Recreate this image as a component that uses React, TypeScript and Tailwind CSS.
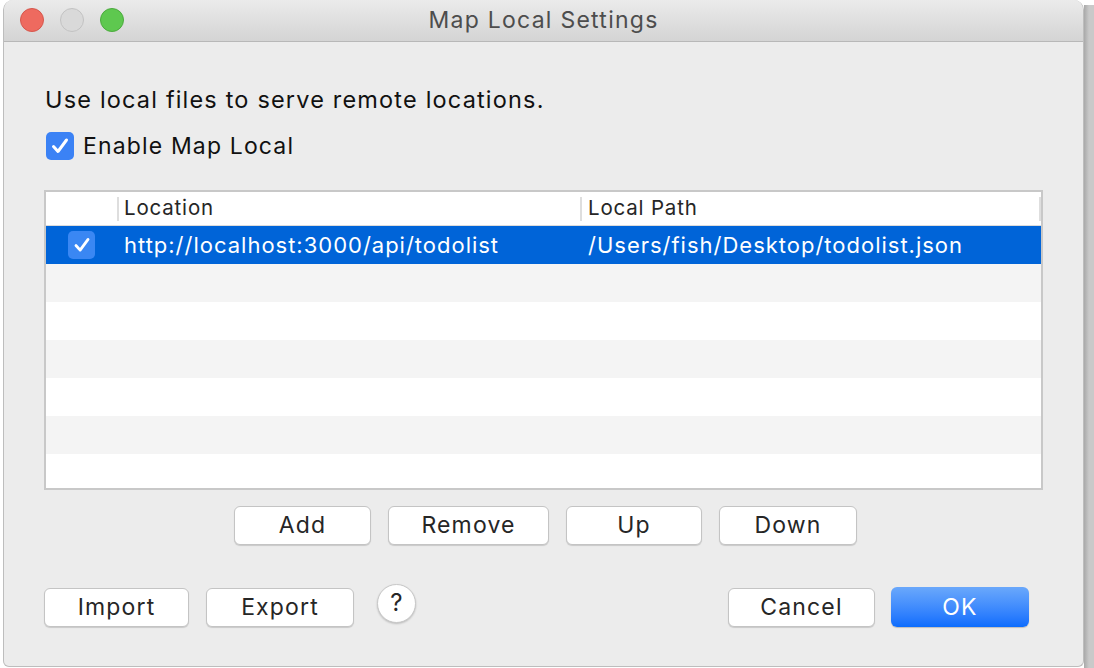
import React from 'react'

const font = { fontFamily: 'Inter, "Noto Sans", sans-serif' }

function Check({ size }: { size: number }) {
  return (
    <svg width={size} height={size} viewBox="0 0 28 28">
      <path d="M7.5 14.5 L12 19.5 L20.5 8" fill="none" stroke="white" strokeWidth="3" strokeLinecap="round" strokeLinejoin="round" />
    </svg>
  )
}

function Btn({ label, w }: { label: string; w: string }) {
  return (
    <div className={`${w} h-[39px] flex items-center justify-center rounded-[6px] bg-white border border-[#c4c4c4] shadow-[0_1px_1px_rgba(0,0,0,0.15)] text-[23px] tracking-[0.05em] text-[#262626]`}>
      {label}
    </div>
  )
}

export default function App() {
  const rows = [0, 1, 2, 3, 4, 5]
  return (
    <div className="w-[1094px] h-[668px] bg-white flex overflow-hidden" style={font}>
      <div className="w-[3px]" />
      <div className="w-[1081px] h-[667px] flex flex-col bg-[#ececec] border-x border-b border-[#bdbdbd] rounded-t-[10px] rounded-b-[6px] overflow-hidden">
        {/* title bar */}
        <div className="h-[42px] shrink-0 relative flex items-center justify-center bg-gradient-to-b from-[#ebebeb] to-[#d4d4d4] border-b border-[#b8b8b8]">
          <div className="absolute left-[16px] top-[8px] flex gap-[16px]">
            <div className="w-[24px] h-[24px] rounded-full bg-[#ee6a5f] border border-[#d5574d]" />
            <div className="w-[24px] h-[24px] rounded-full bg-[#d9d9d9] border border-[#c2c2c2]" />
            <div className="w-[24px] h-[24px] rounded-full bg-[#5ec84f] border border-[#4caa3e]" />
          </div>
          <span className="text-[23px] tracking-[0.055em] text-[#4d4d4d]">Map Local Settings</span>
        </div>

        <div className="flex flex-col pl-[40px] pr-[40px]">
          <div className="mt-[44px] pl-[1px] h-[28px] flex items-center text-[23.5px] tracking-[0.05em] text-[#111]">
            Use local files to serve remote locations.
          </div>
          <div className="mt-[18px] h-[28px] flex items-center gap-[9px] pl-[2px]">
            <div className="w-[28px] h-[28px] rounded-[5px] bg-[#3b82f5] flex items-center justify-center">
              <Check size={28} />
            </div>
            <span className="text-[23px] tracking-[0.05em] text-[#111]">Enable Map Local</span>
          </div>

          {/* table */}
          <div className="mt-[30px] w-[999px] h-[300px] border-2 border-[#c8c8c8] bg-white flex flex-col overflow-hidden">
            <div className="h-[34px] shrink-0 flex items-center border-b border-[#dcdcdc] text-[20.5px] tracking-[0.04em] text-[#262626]">
              <div className="w-[71px] h-full" />
              <div className="w-[463px] h-full flex items-center">
                <div className="w-[2px] h-[24px] bg-[#dedede]" />
                <span className="pl-[5px]">Location</span>
              </div>
              <div className="flex-1 h-full flex items-center">
                <div className="w-[2px] h-[24px] bg-[#dedede]" />
                <span className="pl-[6px]">Local Path</span>
                <div className="ml-auto w-[2px] h-[24px] bg-[#dedede]" />
              </div>
            </div>
            <div className="h-[38px] shrink-0 flex items-center bg-[#0064d8] text-white text-[22px] tracking-[0.045em]">
              <div className="w-[71px] flex justify-center">
                <div className="w-[27px] h-[28px] rounded-[5px] bg-[#3a87f3] flex items-center justify-center">
                  <Check size={26} />
                </div>
              </div>
              <div className="w-[463px] pl-[7px]">http://localhost:3000/api/todolist</div>
              <div className="flex-1 pl-[8px]">/Users/fish/Desktop/todolist.json</div>
            </div>
            {rows.map((r) => (
              <div key={r} className={`h-[38px] shrink-0 ${r % 2 === 0 ? 'bg-[#f4f4f4]' : 'bg-white'}`} />
            ))}
          </div>

          <div className="mt-[16px] flex gap-[17px] pl-[190px]">
            <Btn label="Add" w="w-[137px]" />
            <Btn label="Remove" w="w-[161px]" />
            <Btn label="Up" w="w-[136px]" />
            <Btn label="Down" w="w-[138px]" />
          </div>

          <div className="mt-[42px] flex items-center">
            <Btn label="Import" w="w-[145px]" />
            <div className="w-[17px]" />
            <Btn label="Export" w="w-[148px]" />
            <div className="ml-[23px] w-[39px] h-[39px] -mt-[8px] rounded-full bg-white border border-[#c8c8c8] shadow-[0_1px_2px_rgba(0,0,0,0.2)] flex items-center justify-center text-[24px] text-[#262626]">
              ?
            </div>
            <div className="ml-auto" />
            <Btn label="Cancel" w="w-[147px]" />
            <div className="w-[16px]" />
            <div className="w-[138px] h-[40px] flex items-center justify-center rounded-[6px] bg-gradient-to-b from-[#6aa8fb] to-[#0a6cfd] text-white text-[23px] tracking-[0.05em] shadow-[0_1px_1px_rgba(0,0,0,0.2)]">
              OK
            </div>
            <div className="w-[14px]" />
          </div>
        </div>
      </div>
      <div className="flex-1 mt-[5px] bg-gradient-to-r from-[#a9a9a9] via-[#c9c9c9] to-[#c9c9c9]" />
    </div>
  )
}
